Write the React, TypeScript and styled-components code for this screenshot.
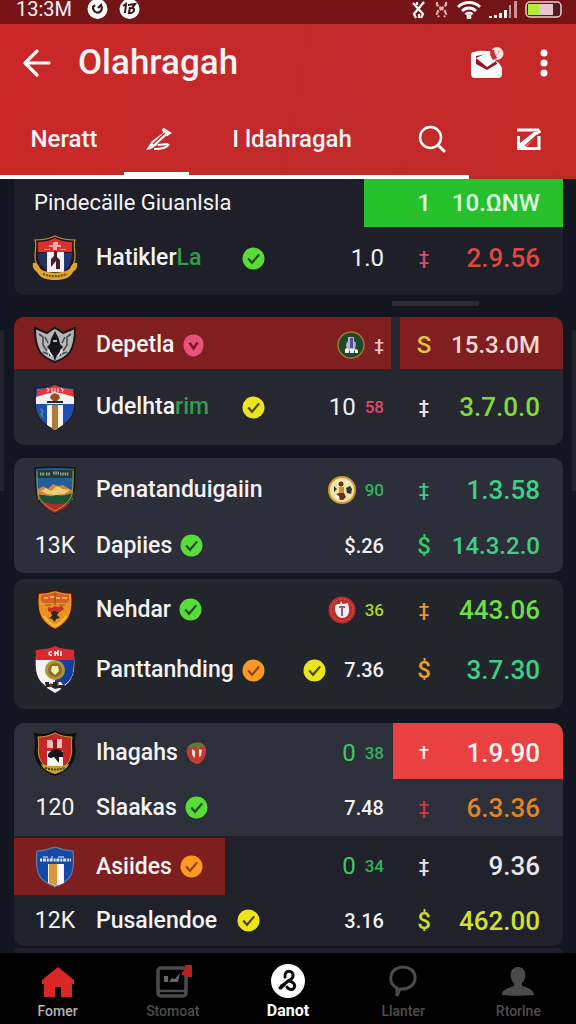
import React from 'react';
import styled, { createGlobalStyle } from 'styled-components';

const GlobalStyle = createGlobalStyle`
  * { box-sizing: border-box; }
  body {
    margin: 0;
    background: #131520;
    color: #f4f4f6;
    font-family: Roboto, "Liberation Sans", sans-serif;
  }
  button { font: inherit; color: inherit; background: none; border: 0; padding: 0; cursor: pointer; }
  a { color: inherit; text-decoration: none; }
  svg { display: block; flex: none; }
`;

const Page = styled.div`
  position: relative;
  display: flex;
  flex-direction: column;
  min-height: 100vh;
`;

const StatusBar = styled.div`
  display: flex;
  align-items: center;
  justify-content: space-between;
  height: 24px;
  padding: 0 14px 5px 16px;
  background: #741417;
  font-size: 20px;
  line-height: 19px;
`;

const StatusGroup = styled.div<{ $gap: number }>`
  display: flex;
  align-items: center;
  gap: ${(p) => p.$gap}px;
`;

const Header = styled.header`
  background: linear-gradient(100deg, #cb2828, #c02a2a 60%, #c62928);
`;

const TitleRow = styled.div`
  display: flex;
  align-items: center;
  height: 78px;
  padding: 0 24px 0 20px;
`;

const Title = styled.h1`
  flex: 1;
  margin: 0 0 0 24px;
  font-size: 35px;
  line-height: 40px;
  font-weight: 500;
`;

const HeaderActions = styled.div`
  display: flex;
  align-items: center;
  gap: 32px;
`;

const Tabs = styled.nav`
  display: grid;
  grid-template-columns: 124fr 65fr 202fr 80fr 105fr;
  height: 73px;
`;

const Tab = styled.button<{ $active?: boolean; $end?: boolean }>`
  display: flex;
  align-items: center;
  justify-content: ${(p) => (p.$end ? 'flex-end' : 'center')};
  padding: 4px ${(p) => (p.$end ? 34 : 0)}px 0 ${(p) => (p.$end ? 0 : 4)}px;
  border-bottom: 3px solid ${(p) => (p.$active ? '#fff' : 'transparent')};
  font-size: 24px;
  line-height: 28px;
  font-weight: 500;
  white-space: nowrap;
`;

const TabTrack = styled.div`
  height: 4px;
  background: linear-gradient(90deg, #fff 81.4%, #b52d25 81.4%);
`;

const List = styled.main`
  flex: 1;
  display: flex;
  flex-direction: column;
  padding: 0 13px 0 14px;
`;

const Card = styled.section<{ $bg: string; $top?: number; $bottom?: number; $gap: number; $flat?: boolean }>`
  background: ${(p) => p.$bg};
  border-radius: ${(p) => (p.$flat ? '0 0 10px 10px' : '10px')};
  padding: ${(p) => p.$top ?? 0}px 0 ${(p) => p.$bottom ?? 0}px;
  margin-bottom: ${(p) => p.$gap}px;
  overflow: hidden;
`;

const DragHandle = styled.div`
  width: 87px;
  height: 5px;
  margin: 6px 84px 11px auto;
  background: #292a34;
`;

const NextCard = styled.div`
  flex: 1;
  min-height: 5px;
  border-radius: 10px 10px 0 0;
  background: #1f202c;
`;

const RowBox = styled.div<{ $h: number; $bg?: string; $split?: boolean }>`
  display: flex;
  gap: ${(p) => (p.$split ? 9 : 0)}px;
  height: ${(p) => p.$h}px;
  background: ${(p) => p.$bg ?? 'transparent'};
`;

const Main = styled.div<{ $bg?: string; $split?: boolean; $drop: number }>`
  flex: 1;
  display: flex;
  align-items: center;
  justify-content: space-between;
  min-width: 0;
  padding: ${(p) => p.$drop}px ${(p) => (p.$split ? 7 : 9)}px 0 0;
  background: ${(p) => p.$bg ?? 'transparent'};
`;

const Lead = styled.div<{ $bg?: string; $plain?: boolean }>`
  display: flex;
  align-items: center;
  align-self: stretch;
  margin-top: ${(p) => (p.$bg ? 2 : 0)}px;
  padding: 0 22px 0 ${(p) => (p.$plain ? 20 : 0)}px;
  background: ${(p) => p.$bg ?? 'transparent'};
`;

const Slot = styled.div`
  display: flex;
  justify-content: center;
  width: 82px;
  font-size: 23px;
  line-height: 28px;
`;

const Name = styled.span<{ $w?: number; $light?: boolean }>`
  min-width: ${(p) => p.$w ?? 0}px;
  margin-right: 8px;
  font-size: ${(p) => (p.$light ? 22 : 23)}px;
  line-height: 28px;
  font-weight: ${(p) => (p.$light ? 400 : 500)};
  white-space: nowrap;
`;

const Tail = styled.span`
  color: #2f9e4a;
`;

const Mid = styled.div`
  display: flex;
  align-items: center;
  gap: 9px;
  line-height: 28px;
  white-space: nowrap;
`;

const Stat = styled.span<{ $c?: string; $size?: 'small' | 'large' }>`
  color: ${(p) => p.$c ?? '#f0f0f4'};
  font-size: ${(p) => (p.$size === 'small' ? 17 : p.$size === 'large' ? 24 : 20)}px;
  font-weight: ${(p) => (p.$size === 'large' ? 400 : 500)};
`;

const Side = styled.div<{ $bg?: string; $w: number; $drop: number }>`
  display: flex;
  align-items: center;
  justify-content: flex-end;
  width: ${(p) => p.$w}px;
  padding: ${(p) => p.$drop}px 23px 0 0;
  background: ${(p) => p.$bg ?? 'transparent'};
`;

const Sign = styled.span<{ $c: string; $small: boolean }>`
  width: 40px;
  text-align: center;
  font-size: ${(p) => (p.$small ? 19 : 24)}px;
  line-height: 28px;
  font-weight: 500;
  color: ${(p) => p.$c};
`;

const Price = styled.span<{ $c: string; $long: boolean }>`
  width: 96px;
  text-align: right;
  font-size: ${(p) => (p.$long ? 24 : 26)}px;
  line-height: 30px;
  font-weight: 500;
  white-space: nowrap;
  color: ${(p) => p.$c};
`;

const BottomNav = styled.nav`
  display: grid;
  grid-template-columns: repeat(5, 1fr);
  height: 71px;
  background: #000;
`;

const NavItem = styled.a<{ $c: string; $bold?: boolean }>`
  display: flex;
  flex-direction: column;
  align-items: center;
  padding-top: 11px;
  gap: 3px;
  color: ${(p) => p.$c};
  font-size: ${(p) => (p.$bold ? 16 : 14)}px;
  line-height: 20px;
  font-weight: ${(p) => (p.$bold ? 700 : 500)};
`;

const EdgeBar = styled.div<{ $right?: boolean }>`
  position: absolute;
  top: 330px;
  ${(p) => (p.$right ? 'right: 0' : 'left: 0')};
  width: 4px;
  height: 161px;
  background: #20222d;
`;

const Check = ({ bg, mark }: { bg: string; mark: string }) => (
  <svg width="23" height="23" viewBox="0 0 23 23">
    <circle cx="11.5" cy="11.5" r="11" fill={bg} />
    <path d="M6.2 11.6l3.8 4.2L17.2 7.4" fill="none" stroke={mark} strokeWidth="2.2" />
  </svg>
);
const green = <Check bg="#59dc38" mark="#17501b" />;
const yellow = <Check bg="#ece41c" mark="#4b4a10" />;
const orange = <Check bg="#fb9a20" mark="#93400c" />;
const pink = (
  <svg width="21" height="23" viewBox="0 0 21 23">
    <path d="M10.5.5C17 .5 20.500 5 20.500 11S16 22.500 10.500 22.500.5 17 .5 11 4 .5 10.500.5z" fill="#e95278" />
    <path d="M6.500 8.500l4 6 4-6" fill="none" stroke="#7d1730" strokeWidth="2.400" />
  </svg>
);
const berry = (
  <svg width="21" height="24" viewBox="0 0 21 24">
    <path d="M10 2c7-2 11 4 10 10s-5 11-9 11S1 17 .7 11 4 3 10 2z" fill="#c43a2c" />
    <path d="M2 6c3-5 12-7 17 0l-4-1-3 3-3-3-3 2z" fill="#52803a" />
    <path d="M6 8l3 2v7l-3-3zM13 8l3 1-1 6-2 1z" fill="#fbd9d6" />
  </svg>
);

const S = 'M22 1c5 3 11 4 19 4 1 10 2 20-2 28-3 6-9 10-17 14C14 43 8 39 5 33 1 25 2 15 3 5c8 0 14-1 19-4z';
const crests: Record<string, React.ReactNode> = {
  hati: (
    <svg width="46" height="46" viewBox="0 0 46 46">
      <path d="M23 1c6 3 13 4 20 4-2 4 0 10 0 16 0 10-7 18-20 22C10 39 3 31 3 21 3 15 5 9 3 5c7 0 14-1 20-4z" fill="#26151a" stroke="#c8933a" strokeWidth="1.200" />
      <path d="M23 3c6 3 11 4 17 4v10H6V7c6 0 11-1 17-4z" fill="#d9302f" />
      <path d="M6 18h9v18C9 31 6 26 6 18z" fill="#26305f" />
      <path d="M15 17h17v20H15z" fill="#f3eef0" />
      <path d="M32 18h8c0 9-3 14-8 18z" fill="#243576" />
      <path d="M21 7h5v3h3v2h-4v3h-4v-3h-4v-2h4zM12 14h6v1h-6zM28 14h6v1h-6z" fill="#f3b0a5" />
      <path d="M22 16h3v6l3 3v9h-4v-8l-5 6v-8l3-3z" fill="#431e2b" />
      <path d="M1 28c3-1 6 2 7 6 9 5 21 5 30 0 1-4 4-7 7-6 1 4-1 7-4 9-3 6-9 8-18 8S8 43 5 37c-3-2-5-5-4-9z" fill="#dfa62d" />
      <path d="M11 39c8 3 16 3 24 0" fill="none" stroke="#6d4b16" strokeWidth="2" strokeDasharray="2 1" />
    </svg>
  ),
  wolf: (
    <svg width="42" height="36" viewBox="0 0 42 36">
      <path d="M1 1l12 5c3-2 5-4 8-5 3 1 5 3 8 5l12-5c0 10-1 18-5 24-4 5-9 8-15 10C15 33 10 30 6 25 2 19 1 11 1 1z" fill="#b4b6b9" stroke="#171719" strokeWidth="2" />
      <path d="M21 4l2 4 2 4 1 5 3 3-3 3 1 6-4-1-2 6-2-6-4 1 1-6-3-3 3-3 1-5 2-4z" fill="#151518" />
      <path d="M5 7l4 3v8l4 6M37 7l-4 3v8l-4 6M11 10l3 6M31 10l-3 6M9 25l5 2M33 25l-5 2" fill="none" stroke="#4a4c50" strokeWidth="1.600" />
      <path d="M14 23l4 6M28 23l-4 6M19 14h4" stroke="#eee" strokeWidth="1.500" />
    </svg>
  ),
  udel: (
    <svg width="44" height="50" viewBox="0 0 44 48">
      <path d={S} fill="#1f4fb0" stroke="#2b1920" strokeWidth="1.200" />
      <path d="M22 2c5 3 10 4 18 4v8H4V6c8 0 13-1 18-4z" fill="#e6383b" />
      <path d="M3 14l10-3 9-2 9 2 10 3v7H3z" fill="#f5f2f1" />
      <path d="M14 22h16v20l-8 5-8-5z" fill="#f7f4f0" />
      <path d="M19 22h6v24l-3 1-3-1z" fill="#b3793a" />
      <path d="M14 5l2 2-2 2M19 5v4h3V5M25 5v4M28 5l2 2-1 2" stroke="#ffd5cf" strokeWidth="1.200" fill="none" />
      <path d="M18 12l4-2 4 2 1 3-3 3h-4l-3-3z" fill="#9b4e22" />
      <path d="M14 18h16v2H14z" fill="#23282e" />
      <path d="M7 26l3 2-2 3 2 3" stroke="#3c9b73" fill="none" strokeWidth="1.500" />
    </svg>
  ),
  hills: (
    <svg width="44" height="48" viewBox="0 0 44 48">
      <path d="M2 2c12-1 28-1 40 0-1 10 0 20-2 28-2 8-10 12-18 17C14 42 6 38 4 30 2 22 3 12 2 2z" fill="#1f5f9a" stroke="#17140f" strokeWidth="1.500" />
      <path d="M4 4h36v8H4z" fill="#233a35" />
      <path d="M7 8h5m1 0h4m3-1h6m1 1h9" stroke="#92a79a" strokeWidth="3" strokeDasharray="1.500 .8" />
      <path d="M4 24l6-4 5 3 5-5 5 2 5-1 10 6v9H5z" fill="#d5813a" />
      <path d="M8 25l5-3 5 3 6-5 6 3 7 1-6 4-9 1-8-1z" fill="#edcd76" />
      <path d="M5 29c6-1 12 3 18 0 6 1 12 0 18-3 0 7-3 11-8 14H11c-4-3-5-6-6-11z" fill="#1d5335" />
      <path d="M7 35c10 4 20 4 30 1-3 5-8 8-15 11-7-3-12-7-15-12z" fill="#b42a2b" />
      <path d="M4 5c0 13 0 20 2 26 3 6 9 10 16 14 7-4 13-8 16-14 2-6 2-13 2-26" fill="none" stroke="#b09845" strokeWidth="1" />
    </svg>
  ),
  lion: (
    <svg width="38" height="42" viewBox="0 0 38 42">
      <path d="M19 1c6 2 11 3 17 3 1 9 1 18-3 25-3 5-8 9-14 12C13 38 8 34 5 29 1 22 1 13 2 4c6 0 11-1 17-3z" fill="#e99122" stroke="#45170f" strokeWidth="2" />
      <path d="M19 3c5 2 9 3 14 3v6H5V6c5 0 9-1 14-3z" fill="#dd5c27" />
      <path d="M8 9h4m2-1h5m1 1h4m2 0h5" stroke="#f2b158" strokeWidth="2" />
      <path d="M6 13h26M19 4v12M9 16h6M23 16h6" stroke="#a04a18" strokeWidth="1.200" />
      <path d="M12 18l4 1 2-2 4 1 4-1 2 3-4 3-4-1-4 2-4-2z" fill="#c93221" />
      <path d="M15 23l4-1 4 1-2 3 3 3-4 1-1 3-3-3-3-1 3-2z" fill="#292a22" />
      <path d="M8 27c3 5 7 8 11 10 4-2 8-5 11-10" fill="none" stroke="#f4c43c" strokeWidth="1.500" />
    </svg>
  ),
  medal: (
    <svg width="44" height="50" viewBox="0 0 44 50">
      <path d={S} fill="#f5f4f5" stroke="#3b1b25" />
      <path d="M22 14h19c0 12-1 18-6 23-4 4-9 5-13 6z" fill="#173e98" />
      <path d="M22 1c6 3 12 3 19 4v10H3V5c8-1 14-1 19-4z" fill="#dc292d" />
      <path d="M19 7c-4-1-4 4 0 3M22 6v5M25 5v6M22 8h3M28 6v5" stroke="#fff" strokeWidth="1.500" fill="none" />
      <circle cx="22" cy="25" r="10" fill="#b4943a" />
      <circle cx="22" cy="25" r="7" fill="#897027" />
      <path d="M19 21h6l1 5-4 4-4-4z" fill="#f4edaa" />
      <path d="M14 43l4-6h10l2 3-3 5-5 3z" fill="#f5f4f5" />
      <path d="M12 37h4v2h4v-2h5v3h7l-1 3h-5l-4 1-4-2h-5z" fill="#24222c" />
      <path d="M18 38v4M25 37v4" stroke="#c83a39" strokeWidth="1.500" />
    </svg>
  ),
  hagah: (
    <svg width="44" height="48" viewBox="0 0 44 48">
      <path d="M22 2c6 4 12 5 20 3-3 8 1 15-1 22-2 10-9 15-19 19C12 42 5 37 3 27 1 20 5 13 2 5c8 2 14 1 20-3z" fill="#23150f" stroke="#0f0d0d" strokeWidth="2" />
      <path d="M22 4c6 3 11 4 17 4-2 7 1 12-1 19-2 8-8 13-16 17C14 40 8 35 6 27 4 20 7 15 5 8c6 0 11-1 17-4z" fill="#c32827" stroke="#c69a44" />
      <path d="M14 11h5l1 3 4-2v-2h5v9H14z" fill="#f6bdb4" />
      <path d="M20 11h4v10h-4z" fill="#8d1d1d" />
      <path d="M14 22h16v15H14z" fill="#f6f3f1" />
      <path d="M15 25l4-4 6-1 5 3v5h-4v6l-5-6-3 1-3-1z" fill="#16151a" />
      <path d="M8 35c8 3 20 3 28 0-2 5-7 8-14 10-7-2-12-5-14-10z" fill="#c5a72e" />
      <path d="M12 39c7 2 13 2 20 0" fill="none" stroke="#513f12" strokeWidth="2" strokeDasharray="2 1" />
    </svg>
  ),
  shield: (
    <svg width="40" height="42" viewBox="0 0 40 42">
      <path d="M20 1c6 2 11 4 18 4 1 9 1 17-2 24-3 6-9 9-16 12C13 38 7 35 4 29 1 22 1 14 2 5c7 0 12-2 18-4z" fill="#1648a6" stroke="#5f7ba5" strokeWidth="1.200" />
      <path d="M13 18h16v19l-9 3-7-3z" fill="#f6f2e8" />
      <path d="M14 18h8v22l-8-3z" fill="#d8973c" />
      <path d="M24 18h4v19l-4 2z" fill="#fff" />
      <path d="M5 14h31" stroke="#dae5f7" strokeWidth="3" strokeDasharray="2 .8 3 1" />
      <path d="M8 11h5m4-1v3m6-2h6" stroke="#9dbce9" strokeWidth="1.500" />
    </svg>
  ),
};

const coin = {
  forest: (
    <svg width="28" height="28" viewBox="0 0 28 28">
      <circle cx="14" cy="14" r="13" fill="#1f4828" stroke="#a77730" strokeWidth="1.400" />
      <path d="M11 6h6v4l2 2-1 8h-8l-1-7 2-3z" fill="#b3b6cf" />
      <path d="M13 7h3v10h-3z" fill="#554aa4" />
      <path d="M8 22v-4l2-1 2 2v3zm5 0v-4h4v4zm5 0v-4l3 1v3z" fill="#f2f6f3" />
    </svg>
  ),
  gold: (
    <svg width="28" height="28" viewBox="0 0 28 28">
      <circle cx="14" cy="14" r="13" fill="#f2e3a8" stroke="#d29a2c" strokeWidth="2" />
      <circle cx="13" cy="8" r="2.500" fill="#613018" />
      <path d="M11 11h5v6h-5z" fill="#d28f2c" />
      <path d="M18 12l4-2 2 3-1 5-4-1zM6 10l3 3-3 3z" fill="#1e3830" />
      <path d="M8 18l3-1h5l2 4-3 3h-3l-1-4z" fill="#702a20" />
      <path d="M7 19l3 3M20 6l-3 2" stroke="#fff" strokeWidth="2" />
    </svg>
  ),
  ruby: (
    <svg width="28" height="28" viewBox="0 0 28 28">
      <circle cx="14" cy="14" r="13.500" fill="#be2b2d" />
      <circle cx="14" cy="14" r="11" fill="none" stroke="#d96b62" strokeDasharray="1.500 1.500" />
      <path d="M7 10c1-2 3-2 5-2l1-3 2 3 5-1 1 5c1 7-3 10-7 10s-8-5-7-12z" fill="#f7ecf0" />
      <path d="M11 10h6v2h-2v8h-2v-8h-2z" fill="#8a5e91" />
    </svg>
  ),
};

type RowData = {
  h: number;
  drop?: number;
  crest?: string;
  code?: string;
  plain?: boolean;
  name: React.ReactNode;
  nameW?: number;
  mark?: React.ReactNode;
  mid?: React.ReactNode;
  sign: string;
  signC: string;
  price: string;
  priceC: string;
  long?: boolean;
  bg?: string;
  mainBg?: string;
  leadBg?: string;
  sideBg?: string;
  sideW?: number;
  split?: boolean;
};

const Row = (r: RowData) => (
  <RowBox $h={r.h} $bg={r.bg} $split={r.split}>
    <Main $bg={r.mainBg} $split={r.split} $drop={r.drop ?? 0}>
      <Lead $bg={r.leadBg} $plain={r.plain}>
        {!r.plain && <Slot>{r.crest ? crests[r.crest] : r.code}</Slot>}
        <Name $w={r.nameW} $light={r.plain}>{r.name}</Name>
        {r.mark}
      </Lead>
      <Mid>{r.mid}</Mid>
    </Main>
    <Side $bg={r.sideBg} $w={r.sideW ?? 170} $drop={r.drop ?? 0}>
      <Sign $c={r.signC} $small={r.sign === '‡' || r.sign === '†'}>{r.sign}</Sign>
      <Price $c={r.priceC} $long={!!r.long}>{r.price}</Price>
    </Side>
  </RowBox>
);

const BluetoothIcon = ({ dim }: { dim?: boolean }) => (
  <svg width="15" height="18" viewBox="0 0 15 18" fill="none" stroke={dim ? '#e0b0b0' : '#fff'} strokeWidth="2.2">
    {dim ? (
      <path d="M3 1v3l8 6 1 3-2 3M12 1v3l-8 6-1 3 2 3M6 8h3" strokeDasharray="5 1" />
    ) : (
      <path d="M2 2l10 11-2 4M13 1L3 13l2 4M6 1v3M8 13v4" />
    )}
  </svg>
);

export default function App() {
  return (
    <Page>
      <GlobalStyle />
      <StatusBar>
        <StatusGroup $gap={15}>
          <span>13:3M</span>
          <StatusGroup $gap={11}>
            <svg width="21" height="20" viewBox="0 0 21 20">
              <circle cx="10.500" cy="9" r="10" fill="#fff" />
              <path d="M6 6c-1 8 9 9 9 1M6 7l2-2M11 8l3-3 1 3" fill="none" stroke="#35171a" strokeWidth="2.200" />
            </svg>
            <svg width="21" height="20" viewBox="0 0 21 20">
              <circle cx="10.500" cy="9" r="10" fill="#fff" />
              <path d="M4 6l3-2-1 9M9 5l7-1-3 4c4 0 2 6-3 5l1-6" fill="none" stroke="#35171a" strokeWidth="2" />
            </svg>
          </StatusGroup>
        </StatusGroup>
        <StatusGroup $gap={8}>
          <BluetoothIcon />
          <BluetoothIcon dim />
          <svg width="24" height="18" viewBox="0 0 24 18" fill="none" stroke="#fff" strokeWidth="2.800">
            <path d="M1 6c6-6 16-6 22 0M5 10c4-4 10-4 14 0M8.500 13.500c2-2 5-2 7 0" />
            <circle cx="12" cy="16" r="1" />
          </svg>
          <svg width="28" height="18" viewBox="0 0 28 18" fill="#fff">
            <path d="M0 15h3v2H0zM5 14h3v3H5zM10 12h3v5h-3zM15 9h3v8h-3z" />
            <path d="M20 4h2v13h-2zM25 0h3v17h-3z" fill="#c79195" />
          </svg>
          <svg width="37" height="17" viewBox="0 0 37 17">
            <rect x="1" y="1" width="35" height="15" rx="4" fill="#4e1c20" stroke="#eccfce" strokeWidth="1.500" />
            <path d="M3 3h11v11H3z" fill="#b6ea39" />
            <path d="M14 3h14v11H14z" fill="#e5c6cc" />
          </svg>
        </StatusGroup>
      </StatusBar>

      <Header>
        <TitleRow>
          <button aria-label="Back">
            <svg width="34" height="32" viewBox="0 0 34 32" fill="none" stroke="#fff" strokeWidth="3.200" strokeLinecap="round" strokeLinejoin="round">
              <path d="M17 4L5 16l12 12M5 16h24" />
            </svg>
          </button>
          <Title>Olahragah</Title>
          <HeaderActions>
            <button aria-label="Messages">
              <svg width="34" height="34" viewBox="0 0 34 34">
                <path d="M4 6c5-2 10-1 16-1l3 8 6 4 3 5v6c0 2-1 4-4 4H5c-2 0-4-1-4-4V9c0-2 1-3 3-3z" fill="#fff" />
                <path d="M6 10l11-2 9 7 1 3-10 6-11-6z" fill="#8e1c22" />
                <path d="M6 12l9-4h7l4 7-9 6z" fill="#fff" />
                <circle cx="27" cy="7.500" r="6.500" fill="#fde3e2" />
                <path d="M21 4l3 0 1 4 2 4-4 2-3-5z" fill="#d5262c" />
                <path d="M28 4l1 3-3 2" stroke="#e7a3a3" fill="none" />
              </svg>
            </button>
            <button aria-label="More options">
              <svg width="16" height="30" viewBox="0 0 16 30" fill="#fff">
                <circle cx="8" cy="5" r="3.500" />
                <circle cx="8" cy="15" r="3.500" />
                <circle cx="8" cy="25" r="3.500" />
              </svg>
            </button>
          </HeaderActions>
        </TitleRow>
        <Tabs>
          <Tab>Neratt</Tab>
          <Tab $active aria-label="Edit">
            <svg width="28" height="24" viewBox="0 0 28 24" fill="none" stroke="#fff">
              <path d="M1 23L7 14 18 6l-1-4 2-1 8 5-6 4-9 8-6 4z" fill="#fff" stroke="none" />
              <path d="M20 6L8 17M22 9l-9 8" stroke="#c12828" strokeWidth="1.500" />
              <path d="M9 22c7 0 13-1 15-5M13 18l10-1" strokeWidth="2" />
            </svg>
          </Tab>
          <Tab>I ldahragah</Tab>
          <Tab aria-label="Search">
            <svg width="30" height="28" viewBox="0 0 30 28" fill="none" stroke="#fff" strokeWidth="2.500">
              <circle cx="12.500" cy="12.500" r="10.500" />
              <path d="M20 20l6 6" strokeWidth="3" strokeLinecap="round" />
            </svg>
          </Tab>
          <Tab $end aria-label="Compose">
            <svg width="26" height="24" viewBox="0 0 26 24" fill="none" stroke="#fff" strokeWidth="3">
              <path d="M1 3h21l2 3M2.500 9v12.500h20.500V9" />
              <path d="M4 16l14-11h6L10 20H4z" fill="#fff" stroke="none" />
              <path d="M21 8L9 19" stroke="#b9292b" strokeWidth="1.300" />
            </svg>
          </Tab>
        </Tabs>
        <TabTrack />
      </Header>

      <List>
        <Card $bg="#1e1f29" $bottom={6} $gap={0} $flat>
          <Row h={48} plain name="Pindecälle Giuanlsla" sideBg="#27c12e" sideW={199} sign="1" signC="#dcffe0" price="10.ΩNW" priceC="#dcffe0" long />
          <Row h={62} crest="hati" name={<>Hatikler<Tail>La</Tail></>} nameW={138} mark={green} mid={<Stat $size="large">1.0</Stat>} sign="‡" signC="#d64c6e" price="2.9.56" priceC="#dc4a3f" />
        </Card>
        <DragHandle />
        <Card $bg="#262731" $gap={13}>
          <Row h={52} drop={4} split mainBg="#801f20" sideBg="#801f20" sideW={163} crest="wolf" name="Depetla" mark={pink} mid={<>{coin.forest}<Stat $c="#f2c8c6" $size="small">‡</Stat></>} sign="S" signC="#e0c544" price="15.3.0M" priceC="#f8d6d4" long />
          <Row h={76} crest="udel" name={<>Udelhta<Tail>rim</Tail></>} nameW={138} mark={yellow} mid={<><Stat $size="large">10</Stat><Stat $c="#e04a5c" $size="small">58</Stat></>} sign="‡" signC="#e6e6ee" price="3.7.0.0" priceC="#7fdc35" />
        </Card>
        <Card $bg="#2c2e3a" $top={4} $gap={6}>
          <Row h={56} crest="hills" name="Penatanduigaiin" mid={<>{coin.gold}<Stat $c="#2fb457" $size="small">90</Stat></>} sign="‡" signC="#3fc48c" price="1.3.58" priceC="#41cd85" />
          <Row h={55} code="13K" name="Dapiies" mark={green} mid={<Stat>$.26</Stat>} sign="$" signC="#35cc64" price="14.3.2.0" priceC="#41cd85" long />
        </Card>
        <Card $bg="#23252d" $bottom={9} $gap={14}>
          <Row h={61} crest="lion" name="Nehdar" mark={green} mid={<>{coin.ruby}<Stat $c="#a6d42c" $size="small">36</Stat></>} sign="‡" signC="#e0982c" price="443.06" priceC="#6fdc48" />
          <Row h={60} crest="medal" name="Panttanhding" mark={orange} mid={<>{yellow}<span /><Stat>7.36</Stat></>} sign="$" signC="#ee9d26" price="3.7.30" priceC="#41cd85" />
        </Card>
        <Card $bg="#20212b" $gap={2}>
          <Row h={56} drop={4} bg="#2d2f3b" crest="hagah" name="Ihagahs" mark={berry} mid={<><Stat $c="#41c765" $size="large">0</Stat><Stat $c="#2fb457" $size="small">38</Stat></>} sideBg="#e94142" sign="†" signC="#ffe9e8" price="1.9.90" priceC="#fff3f2" />
          <Row h={57} bg="#2d2f3b" code="120" name="Slaakas" mark={green} mid={<Stat>7.48</Stat>} sign="‡" signC="#c63a3a" price="6.3.36" priceC="#df8524" />
          <Row h={59} leadBg="#7c1f1e" crest="shield" name="Asiides" mark={orange} mid={<><Stat $c="#41c765" $size="large">0</Stat><Stat $c="#2fb457" $size="small">34</Stat></>} sign="‡" signC="#e3e3eb" price="9.36" priceC="#e6e6ee" />
          <Row h={51} code="12K" name="Pusalendoe" nameW={133} mark={yellow} mid={<Stat>3.16</Stat>} sign="$" signC="#c9dc2e" price="462.00" priceC="#d2e032" />
        </Card>
        <NextCard />
      </List>

      <BottomNav>
        <NavItem href="#home" $c="#b5b5b5">
          <svg width="34" height="34" viewBox="0 0 34 34">
            <path d="M17 3l16 13v4h-2v13H20V23h-6v10H3V20H1v-4z" fill="#d92627" />
          </svg>
          Fomer
        </NavItem>
        <NavItem href="#news" $c="#4d4d4d">
          <svg width="38" height="34" viewBox="0 0 38 34">
            <rect x="4" y="4" width="28" height="28" rx="3" fill="none" stroke="#4b4b4b" strokeWidth="3.500" />
            <path d="M4 27h28" stroke="#4b4b4b" strokeWidth="2.500" />
            <path d="M10 12h4v6h-4zM15 18l3-4 3 1 5-6-2 9z" fill="#666" />
            <path d="M31 1h7v12h-5v-2h-5V8l3-2z" fill="#b91f22" />
          </svg>
          Stomoat
        </NavItem>
        <NavItem href="#live" $c="#fff" $bold>
          <svg width="36" height="34" viewBox="0 0 36 34">
            <circle cx="18" cy="17" r="17" fill="#fff" />
            <path d="M15 13c-1-8 9-7 8-1 0 3-3 4-5 5l-8 7M18 17c5 0 8 4 6 7s-6 1-7-1" fill="none" stroke="#080808" strokeWidth="3" strokeLinecap="round" />
            <path d="M10 21l5-3 1 3-5 5z" fill="#080808" />
          </svg>
          Danot
        </NavItem>
        <NavItem href="#chat" $c="#4d4d4d">
          <svg width="30" height="34" viewBox="0 0 30 34" fill="none" stroke="#4b4b4b" strokeWidth="3">
            <path d="M9 24C3 21 2 17 3 12c2-12 22-12 24 0 1 8-6 14-15 13l-3 7v-8z" />
          </svg>
          Llanter
        </NavItem>
        <NavItem href="#profile" $c="#4d4d4d">
          <svg width="34" height="34" viewBox="0 0 34 34" fill="#4b4b4b">
            <path d="M17 3c9 0 9 12 4 16v3c7 2 12 4 12 9-10 1-22 1-32 0 0-5 5-7 12-9v-3C8 15 8 3 17 3z" />
          </svg>
          Rtorlne
        </NavItem>
      </BottomNav>
      <EdgeBar />
      <EdgeBar $right />
    </Page>
  );
}
